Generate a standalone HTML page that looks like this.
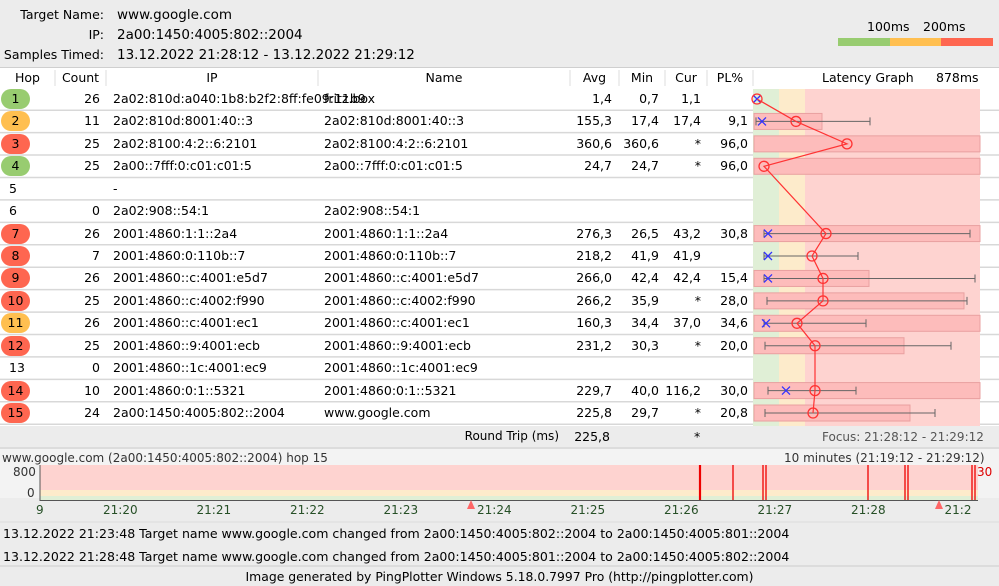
<!DOCTYPE html><html><head><meta charset="utf-8"><style>
body{margin:0;width:999px;height:586px;background:#ececec;font-family:"DejaVu Sans","Liberation Sans",sans-serif;font-size:12.5px;color:#000;position:relative;overflow:hidden}
.a{position:absolute;white-space:nowrap}
.r{text-align:right}
</style></head><body>
<div class="a r" style="left:0;width:104px;top:7px">Target Name:</div>
<div class="a" style="left:117px;top:7px;font-size:13.5px">www.google.com</div>
<div class="a r" style="left:0;width:104px;top:27px">IP:</div>
<div class="a" style="left:117px;top:27px;font-size:13.5px">2a00:1450:4005:802::2004</div>
<div class="a r" style="left:0;width:104px;top:47px">Samples Timed:</div>
<div class="a" style="left:117px;top:47px;font-size:13.5px">13.12.2022 21:28:12 - 13.12.2022 21:29:12</div>
<div class="a" style="left:867px;top:19px">100ms</div><div class="a" style="left:923px;top:19px">200ms</div>
<div class="a" style="left:838px;top:38px;width:52px;height:8px;background:#98cc70"></div>
<div class="a" style="left:890px;top:38px;width:51px;height:8px;background:#ffbf50"></div>
<div class="a" style="left:941px;top:38px;width:52px;height:8px;background:#fe6650"></div>
<div class="a" style="left:0;top:67px;width:999px;height:359px;background:#fff;border-top:1px solid #cfcfcf"></div>
<svg class="a" style="left:0;top:0" width="999" height="586">
<g stroke="#ddd">
<line x1="55" y1="70" x2="55" y2="86"/><line x1="106" y1="70" x2="106" y2="86"/><line x1="318" y1="70" x2="318" y2="86"/><line x1="570" y1="70" x2="570" y2="86"/><line x1="619" y1="70" x2="619" y2="86"/><line x1="665" y1="70" x2="665" y2="86"/><line x1="707" y1="70" x2="707" y2="86"/><line x1="753" y1="70" x2="753" y2="86"/>
</g>
<g stroke="#d8d8d8" stroke-width="1.5" id="seps"></g>
<rect x="753" y="89" width="26" height="337" fill="#e0efd6"/>
<rect x="779" y="89" width="26" height="337" fill="#fdebcb"/>
<rect x="805" y="89" width="175" height="337" fill="#fed3d0"/>
<g id="g"></g>
<rect x="0" y="426" width="999" height="22" fill="#ececec"/>
<line x1="0" y1="448" x2="999" y2="448" stroke="#ccc"/>
<rect x="0" y="449" width="999" height="49" fill="#f3f3f3"/>
<rect x="40" y="465" width="938" height="35" fill="#fed3d0"/>
<rect x="40" y="490" width="938" height="6" fill="#fdebcb"/>
<rect x="40" y="496" width="938" height="4" fill="#e0efd6"/>
<line x1="40" y1="465" x2="40" y2="501" stroke="#555"/>
<line x1="40" y1="500.5" x2="978" y2="500.5" stroke="#555"/>
<g stroke="#e00" stroke-width="1.3">
<line x1="700" y1="465" x2="700" y2="500" stroke-width="2.2"/><line x1="733" y1="465" x2="733" y2="500"/><line x1="763" y1="465" x2="763" y2="500"/><line x1="766" y1="465" x2="766" y2="500"/><line x1="868" y1="465" x2="868" y2="500"/><line x1="905" y1="465" x2="905" y2="500"/><line x1="908" y1="465" x2="908" y2="500"/><line x1="972" y1="465" x2="972" y2="500"/><line x1="975" y1="465" x2="975" y2="500"/>
</g>
<polygon points="467,509 475,509 471,500" fill="#f66"/><polygon points="935,509 943,509 939,500" fill="#f66"/>
<line x1="0" y1="522" x2="999" y2="522" stroke="#ddd"/>
<line x1="0" y1="566" x2="999" y2="566" stroke="#ccc"/>
</svg>
<div class="a" style="left:0;width:55px;top:70px;text-align:center">Hop</div>
<div class="a" style="left:55px;width:51px;top:70px;text-align:center">Count</div>
<div class="a" style="left:106px;width:212px;top:70px;text-align:center">IP</div>
<div class="a" style="left:318px;width:252px;top:70px;text-align:center">Name</div>
<div class="a" style="left:570px;width:49px;top:70px;text-align:center">Avg</div>
<div class="a" style="left:619px;width:46px;top:70px;text-align:center">Min</div>
<div class="a" style="left:665px;width:42px;top:70px;text-align:center">Cur</div>
<div class="a" style="left:707px;width:46px;top:70px;text-align:center">PL%</div>
<div class="a" style="left:822px;top:70px">Latency Graph</div>
<div class="a" style="left:936px;top:70px">878ms</div>
<div id="rows"></div>
<div class="a r" style="left:420px;width:139px;top:429px;font-size:12px">Round Trip (ms)</div>
<div class="a r" style="left:560px;width:50px;top:429px">225,8</div>
<div class="a" style="left:694px;top:429px">*</div>
<div class="a" style="left:822px;top:430px;font-size:12px;color:#555">Focus: 21:28:12 - 21:29:12</div>
<div class="a" style="left:2px;top:451px;font-size:12px;color:#333">www.google.com (2a00:1450:4005:802::2004) hop 15</div>
<div class="a" style="left:784px;top:451px;font-size:12px;color:#333">10 minutes (21:19:12 - 21:29:12)</div>
<div class="a" style="left:13px;top:465px;font-size:12px;color:#333">800</div>
<div class="a" style="left:27px;top:486px;font-size:12px;color:#333">0</div>
<div class="a" style="left:977px;top:465px;font-size:12px;color:#d00">30</div>
<div id="tl"></div>
<div class="a" style="left:3px;top:526px;font-size:12.55px">13.12.2022 21:23:48 Target name www.google.com changed from 2a00:1450:4005:802::2004 to 2a00:1450:4005:801::2004</div>
<div class="a" style="left:3px;top:549px;font-size:12.55px">13.12.2022 21:28:48 Target name www.google.com changed from 2a00:1450:4005:801::2004 to 2a00:1450:4005:802::2004</div>
<div class="a" style="left:0;width:999px;top:569px;text-align:center;font-size:12.4px">Image generated by PingPlotter Windows 5.18.0.7997 Pro (http://pingplotter.com)</div>
<script>
var R=[
[1,'g',26,'2a02:810d:a040:1b8:b2f2:8ff:fe09:11b9','fritz.box','1,4','0,7','1,1','',757,757,null,null,null],
[2,'o',11,'2a02:810d:8001:40::3','2a02:810d:8001:40::3','155,3','17,4','17,4','9,1',762,796,756,870,822],
[3,'r',25,'2a02:8100:4:2::6:2101','2a02:8100:4:2::6:2101','360,6','360,6','*','96,0',null,847,null,null,980],
[4,'g',25,'2a00::7fff:0:c01:c01:5','2a00::7fff:0:c01:c01:5','24,7','24,7','*','96,0',null,764,null,null,980],
[5,'',null,'-','','','','','',null,null,null,null,null],
[6,'',0,'2a02:908::54:1','2a02:908::54:1','','','','',null,null,null,null,null],
[7,'r',26,'2001:4860:1:1::2a4','2001:4860:1:1::2a4','276,3','26,5','43,2','30,8',768,826,764,970,980],
[8,'r',7,'2001:4860:0:110b::7','2001:4860:0:110b::7','218,2','41,9','41,9','',768,812,764,858,null],
[9,'r',26,'2001:4860::c:4001:e5d7','2001:4860::c:4001:e5d7','266,0','42,4','42,4','15,4',768,823,764,975,869],
[10,'r',25,'2001:4860::c:4002:f990','2001:4860::c:4002:f990','266,2','35,9','*','28,0',null,823,767,967,964],
[11,'o',26,'2001:4860::c:4001:ec1','2001:4860::c:4001:ec1','160,3','34,4','37,0','34,6',766,797,764,866,980],
[12,'r',25,'2001:4860::9:4001:ecb','2001:4860::9:4001:ecb','231,2','30,3','*','20,0',null,815,765,951,904],
[13,'',0,'2001:4860::1c:4001:ec9','2001:4860::1c:4001:ec9','','','','',null,null,null,null,null],
[14,'r',10,'2001:4860:0:1::5321','2001:4860:0:1::5321','229,7','40,0','116,2','30,0',786,815,768,856,980],
[15,'r',24,'2a00:1450:4005:802::2004','www.google.com','225,8','29,7','*','20,8',null,813,765,935,910]];
var C={g:'#98cc70',o:'#ffbf50',r:'#fe6650'};
var h='',s='',pts=[],sep='';
R.forEach(function(r,i){var cy=99+i*22.43,t=cy-8;
sep+='<line x1="0" y1="'+(cy+11.2)+'" x2="999" y2="'+(cy+11.2)+'"/>';
if(r[1])h+='<div class="a" style="left:1px;top:'+(cy-10)+'px;width:29px;height:20px;border-radius:10px;background:'+C[r[1]]+';text-align:center;line-height:20px">'+r[0]+'</div>';
else h+='<div class="a" style="left:9px;top:'+t+'px">'+r[0]+'</div>';
function rc(l,w,v){return '<div class="a r" style="left:'+l+'px;width:'+w+'px;top:'+t+'px">'+v+'</div>'}
h+=rc(55,45,r[2]==null?'':r[2]);
h+='<div class="a" style="left:113px;top:'+t+'px">'+r[3]+'</div><div class="a" style="left:324px;top:'+t+'px">'+r[4]+'</div>';
h+=rc(570,42,r[5])+rc(619,40,r[6])+rc(665,36,r[7])+rc(707,41,r[8]);
if(r[13])s+='<rect x="754" y="'+(cy-8)+'" width="'+(r[13]-754)+'" height="16" fill="#fdbcbb" stroke="#e9a0a0"/>';
if(r[11])s+='<line x1="'+r[11]+'" y1="'+cy+'" x2="'+r[12]+'" y2="'+cy+'" stroke="#666"/><line x1="'+r[11]+'" y1="'+(cy-4)+'" x2="'+r[11]+'" y2="'+(cy+4)+'" stroke="#666"/><line x1="'+r[12]+'" y1="'+(cy-4)+'" x2="'+r[12]+'" y2="'+(cy+4)+'" stroke="#666"/>';
if(r[9])s+='<path d="M'+(r[9]-4)+' '+(cy-4)+'l8 8M'+(r[9]+4)+' '+(cy-4)+'l-8 8" stroke="#33f" stroke-width="1.3"/>';
if(r[10])pts.push([r[10],cy]);});
s+='<polyline points="'+pts.map(function(p){return p.join(',')}).join(' ')+'" fill="none" stroke="#f33" stroke-width="1.2"/>';
pts.forEach(function(p){s+='<circle cx="'+p[0]+'" cy="'+p[1]+'" r="5" fill="none" stroke="#f33" stroke-width="1.3"/>'});
document.getElementById('rows').innerHTML=h;
document.getElementById('g').innerHTML=s;
document.getElementById('seps').innerHTML=sep;
var tl='<div class="a" style="left:36px;top:503px;font-size:12px;color:#264f26">9</div>';
['21:20','21:21','21:22','21:23','21:24','21:25','21:26','21:27','21:28','21:2'].forEach(function(x,i){tl+='<div class="a" style="left:'+(103+i*93.5)+'px;top:503px;font-size:12px;color:#264f26">'+x+'</div>'});
document.getElementById('tl').innerHTML=tl;
</script>
</body></html>
